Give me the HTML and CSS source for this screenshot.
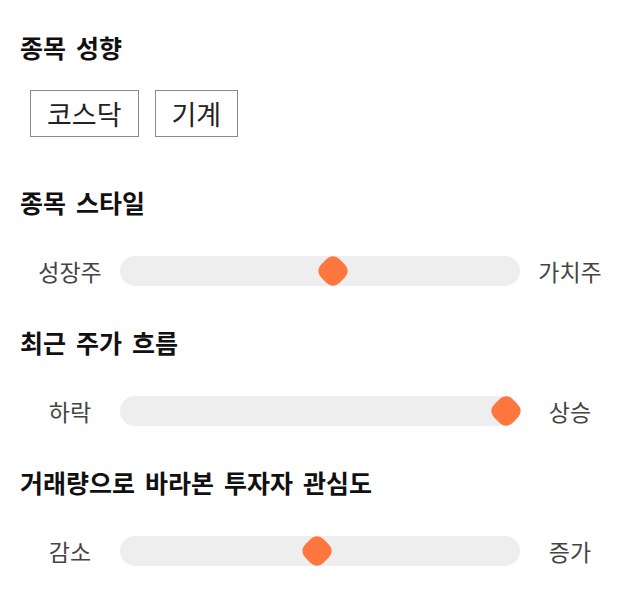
FILE: index.html
```html
<!DOCTYPE html>
<html lang="ko">
<head>
    <meta charset="UTF-8">
    <meta name="viewport" content="width=device-width, initial-scale=1.0">
    <title>종목 성향</title>
    <link rel="stylesheet" href="styles.css">
</head>
<body>
    <div class="panel">
        <section class="block block-tags">
            <h2>종목 성향</h2>
            <div class="tags">
                <span class="tag">코스닥</span>
                <span class="tag">기계</span>
            </div>
        </section>

        <section class="block">
            <h2>종목 스타일</h2>
            <div class="scale">
                <span class="scale-label">성장주</span>
                <div class="track"><div class="thumb" style="--v: 0.535;"></div></div>
                <span class="scale-label">가치주</span>
            </div>
        </section>

        <section class="block">
            <h2>최근 주가 흐름</h2>
            <div class="scale">
                <span class="scale-label">하락</span>
                <div class="track"><div class="thumb" style="--v: 1;"></div></div>
                <span class="scale-label">상승</span>
            </div>
        </section>

        <section class="block">
            <h2>거래량으로 바라본 투자자 관심도</h2>
            <div class="scale">
                <span class="scale-label">감소</span>
                <div class="track"><div class="thumb" style="--v: 0.493;"></div></div>
                <span class="scale-label">증가</span>
            </div>
        </section>
    </div>
</body>
</html>
```

FILE: styles.css
```css
body {
    margin: 0;
    font-family: "Noto Sans CJK KR", "Noto Sans", sans-serif;
    background-color: #ffffff;
    color: #111111;
}
.panel {
    width: 640px;
    padding: 32px 20px 20px;
    box-sizing: border-box;
}
.block h2 {
    margin: 0;
    font-size: 25px; line-height: 30px; font-weight: 700;
    word-spacing: 3px;
    color: #111111;
}
.block-tags { margin-bottom: 50px; }
.block + .block { margin-top: 41px; }
.block-tags + .block { margin-top: 0; }

.tags {
    display: flex; gap: 16px;
    margin: 28px 0 0 10px;
}
.tag {
    display: inline-flex; align-items: center;
    height: 47px; padding: 0 16px;
    border: 1px solid #8a8a8a;
    box-sizing: border-box;
    font-size: 27px; font-weight: 400; color: #222222;
}

.scale {
    display: flex; align-items: center;
    height: 30px; margin-top: 39px;
}
.scale-label {
    width: 100px; flex: none;
    text-align: center;
    font-size: 23px; color: #444444;
}
.track {
    position: relative;
    width: 400px; height: 30px; flex: none;
    border-radius: 15px;
    background-color: #eeeeee;
}
.thumb {
    position: absolute; top: 2px;
    left: calc(1.5px + 371px * var(--v));
    width: 26px; height: 26px;
    border-radius: 9px;
    background-color: #ff763e;
    transform: rotate(45deg);
}
```
